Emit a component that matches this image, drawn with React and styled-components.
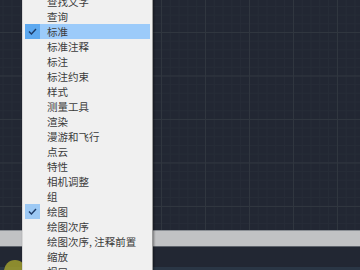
import React from 'react';
import styled, { createGlobalStyle } from 'styled-components';

const GlobalStyle = createGlobalStyle`
    html, body {
        margin: 0;
        padding: 0;
        background: #222733;
        overflow: hidden;
    }
    body {
        font-family: "Noto Sans CJK SC", "Noto Sans", sans-serif;
    }
`;

const Screen = styled.div`
    position: relative;
    width: 360px;
    height: 270px;
    overflow: hidden;
    display: flex;
    flex-direction: column;
`;

const Canvas = styled.div`
    flex: 0 0 230px;
    background-color: #222733;
    background-image:
        linear-gradient(to right, #30363f 1px, transparent 1px),
        linear-gradient(to bottom, #30363f 1px, transparent 1px),
        linear-gradient(to right, #262c37 1px, transparent 1px),
        linear-gradient(to bottom, #262c37 1px, transparent 1px);
    background-size: 44px 44px, 44px 43.5px, 8.8px 8.8px, 8.8px 8.7px;
    background-position: 29px 0, 0 32px, 29px 0, 0 32px;
`;

const ScrollBar = styled.div`
    flex: 0 0 15px;
    background: #c1c2c4;
    border-top: 1px solid #8a8e94;
    border-bottom: 1px solid #5e636b;
`;

const Bottom = styled.div`
    flex: 1;
    display: flex;
    flex-direction: column;
    justify-content: flex-end;
    background: #222733;
`;

const StatusEdge = styled.div`
    height: 3px;
    background: #2a3645;
`;

const CursorGlow = styled.div`
    position: absolute;
    left: 4px;
    top: 260px;
    width: 22px;
    height: 22px;
    border-radius: 50%;
    background: #a7a52d;
    opacity: 0.8;
`;

const Menu = styled.ul`
    position: absolute;
    left: 22px;
    top: -6px;
    width: 125px;
    margin: 0;
    padding: 0 2px;
    list-style: none;
    background: #f0f0f0;
    border-left: 1px solid #d8d8d8;
    border-right: 1px solid #9a9a9a;
    box-shadow: 1px 0 2px rgba(0, 0, 0, 0.4);
`;

const Item = styled.li`
    display: flex;
    align-items: center;
    height: 15px;
    background: ${p => (p.$hover ? '#9ccbfa' : 'transparent')};
    font-size: 10.5px;
    line-height: 15px;
    color: #3c3c3c;
    white-space: nowrap;
`;

const CheckCell = styled.span`
    flex: 0 0 15px;
    height: 15px;
    display: flex;
    align-items: center;
    justify-content: center;
    margin-right: 7px;
    background: ${p => (p.$checked ? (p.$hover ? '#5da9f0' : '#9dc9f4') : 'transparent')};
`;

const Check = () => (
    <svg width="9" height="7" viewBox="0 0 9 7">
        <path d="M1 3.6 L3.4 6 L8 1" fill="none" stroke="#1d3a66" strokeWidth="1.4" />
    </svg>
);

const items = [
    { label: '查找文字' },
    { label: '查询' },
    { label: '标准', checked: true, hover: true },
    { label: '标准注释' },
    { label: '标注' },
    { label: '标注约束' },
    { label: '样式' },
    { label: '测量工具' },
    { label: '渲染' },
    { label: '漫游和飞行' },
    { label: '点云' },
    { label: '特性' },
    { label: '相机调整' },
    { label: '组' },
    { label: '绘图', checked: true },
    { label: '绘图次序' },
    { label: '绘图次序, 注释前置' },
    { label: '缩放' },
    { label: '视口' },
];

const App = () => {
    return (
        <Screen>
            <GlobalStyle />
            <Canvas />
            <ScrollBar />
            <Bottom>
                <StatusEdge />
            </Bottom>
            <CursorGlow />
            <Menu>
                {items.map(item => (
                    <Item key={item.label} $hover={item.hover}>
                        <CheckCell $checked={item.checked} $hover={item.hover}>
                            {item.checked && <Check />}
                        </CheckCell>
                        {item.label}
                    </Item>
                ))}
            </Menu>
        </Screen>
    );
};

export default App;
